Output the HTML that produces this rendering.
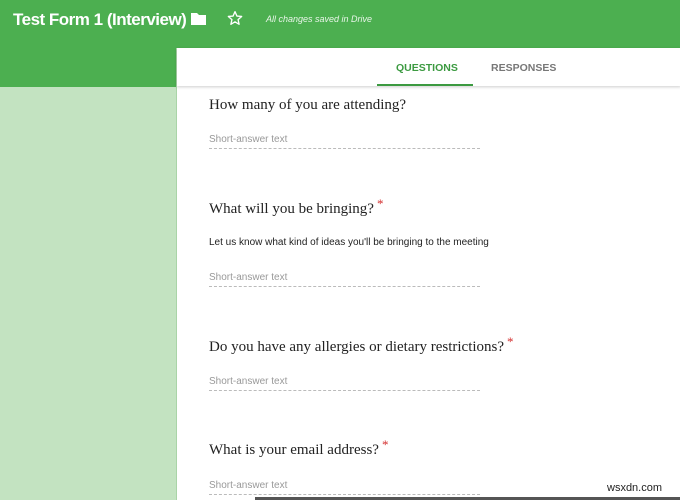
<!DOCTYPE html>
<html><head><style>
body{margin:0;width:680px;height:500px;overflow:hidden;background:#c3e3c1;font-family:"Liberation Sans",sans-serif;position:relative}
.hdr{position:absolute;left:0;top:0;width:680px;height:87px;background:#4caf50}
.title{position:absolute;left:13px;top:10px;color:#fff;font-size:17px;font-weight:bold;letter-spacing:-0.5px}
.saved{position:absolute;left:266px;top:14px;color:#e8f5e8;font-size:9px;font-style:italic}
.card{position:absolute;left:176px;top:48px;width:504px;height:452px;background:#fff;border-left:1px solid #a9d4a7}
.tabs{position:absolute;left:0;top:0;width:504px;height:38px;box-shadow:0 1px 3px rgba(0,0,0,.2);background:#fff}
.tab{position:absolute;top:14px;font-size:10.5px;font-weight:bold}
.ul{position:absolute;left:200px;top:36px;width:96px;height:2px;background:#3c9a41}
.q{position:absolute;left:32px;font-family:"Liberation Serif",serif;font-size:15px;color:#222}
.q span{color:#d32f2f;font-size:13px;position:relative;top:-5px;margin-left:3px}
.sa{position:absolute;left:32px;width:271px;font-size:10px;color:#999;border-bottom:1px dashed #bbb;padding-bottom:3px}
.desc{position:absolute;left:32px;top:189px;font-size:10px;color:#222}
</style></head><body>
<div class="hdr">
<div class="title">Test Form 1 (Interview)</div>
<svg style="position:absolute;left:190px;top:12px" width="17" height="14" viewBox="0 0 17 14"><path d="M1 1h6l2 2h7v10H1z" fill="#fff"/></svg>
<svg style="position:absolute;left:227px;top:10px" width="16" height="16" viewBox="0 0 24 24"><path d="M12 2.5l2.9 6.6 7.1.6-5.4 4.7 1.6 7-6.2-3.7-6.2 3.7 1.6-7L2 9.7l7.1-.6z" fill="none" stroke="#fff" stroke-width="2" stroke-linejoin="round"/></svg>
<div class="saved">All changes saved in Drive</div>
</div>
<div class="card">
<div class="tabs">
<div class="tab" style="left:219px;color:#3c9a41">QUESTIONS</div>
<div class="tab" style="left:314px;color:#777">RESPONSES</div>
<div class="ul"></div>
</div>
<div class="q" style="top:49px">How many of you are attending?</div>
<div class="sa" style="top:86px">Short-answer text</div>
<div class="q" style="top:153px">What will you be bringing?<span>*</span></div>
<div class="desc">Let us know what kind of ideas you'll be bringing to the meeting</div>
<div class="sa" style="top:224px">Short-answer text</div>
<div class="q" style="top:291px">Do you have any allergies or dietary restrictions?<span>*</span></div>
<div class="sa" style="top:328px">Short-answer text</div>
<div class="q" style="top:394px">What is your email address?<span>*</span></div>
<div class="sa" style="top:432px">Short-answer text</div>
</div>
<div style="position:absolute;left:255px;top:497px;width:425px;height:3px;background:#555"></div>
<div style="position:absolute;left:607px;top:482px;font-size:11px;color:#222">wsxdn.com</div>
</body></html>
